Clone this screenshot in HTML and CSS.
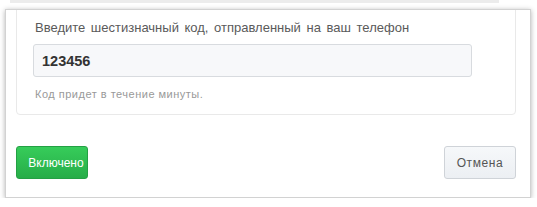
FILE: index.html
```html
<!DOCTYPE html>
<html lang="ru">
<head>
<meta charset="UTF-8">
<title>Подтверждение телефона</title>
<link rel="stylesheet" href="styles.css">
</head>
<body>
<div class="behind"></div>
<div class="dialog">
  <div class="panel">
    <label class="label" for="code">Введите шестизначный код, отправленный на ваш телефон</label>
    <input class="code" id="code" type="text" value="123456">
    <div class="hint">Код придет в течение минуты.</div>
  </div>
  <div class="footer">
    <button class="btn btn-green">Включено</button>
    <button class="btn btn-cancel">Отмена</button>
  </div>
</div>
</body>
</html>
```

FILE: styles.css
```css
body {
  margin: 0;
  background: #fff;
  font-family: "Liberation Sans", Arial, sans-serif;
}

.behind {
  height: 3px;
  margin: 0 38px 0 10px;
  background: #ececec;
}

.dialog {
  margin: 6px 0 0 5px;
  width: 524px;
  height: 187px;
  border: 1px solid #d2d2d2;
  background: #fff;
  box-shadow: 0 1px 5px rgba(0, 0, 0, 0.3);
  overflow: hidden;
}

.panel {
  margin: -6px 14px 0 10px;
  padding: 15px 16px 13px 16px;
  border: 1px solid #e9e9e9;
  border-radius: 4px;
}

.label {
  display: block;
  padding-left: 2px;
  font-size: 13px;
  line-height: 16px;
  word-spacing: 2px;
  color: #5a5a5a;
}

.code {
  display: block;
  box-sizing: border-box;
  margin-top: 8px;
  width: 439px;
  height: 33px;
  padding: 0 8px;
  border: 1px solid #d8dbdf;
  border-radius: 3px;
  background: #f7f8fa;
  font-family: "Liberation Sans", Arial, sans-serif;
  font-size: 14.5px;
  font-weight: bold;
  color: #333;
}

.hint {
  margin-top: 10px;
  padding-left: 2px;
  font-size: 11px;
  line-height: 14px;
  letter-spacing: 0.5px;
  color: #999;
}

.footer {
  display: flex;
  justify-content: space-between;
  margin: 31px 14px 0 10px;
}

.btn {
  width: 72px;
  height: 33px;
  border-radius: 3px;
  font-family: "Liberation Sans", Arial, sans-serif;
  font-size: 12px;
  padding: 0;
}

.btn-green {
  padding-left: 8px;
  border: 1px solid #24a044;
  background: linear-gradient(#36cc5a, #27ad48);
  color: #fff;
}

.btn-cancel {
  border: 1px solid #cfd3d8;
  background: linear-gradient(#f6f8fa, #eceff3);
  color: #555;
  letter-spacing: 0.6px;
}
```
